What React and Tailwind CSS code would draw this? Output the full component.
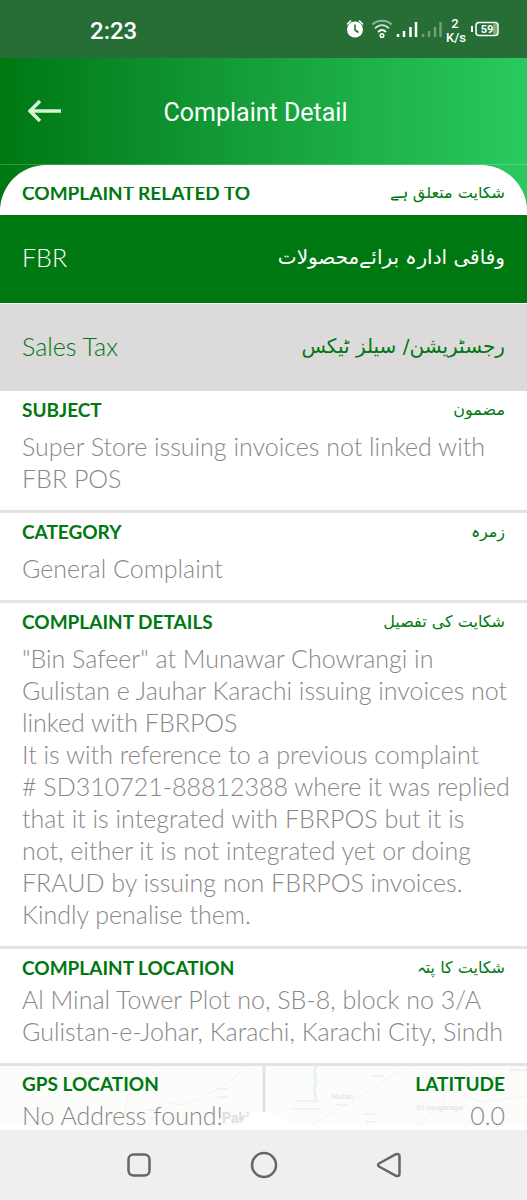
import clsx from 'clsx';

const sections = [
  {
    title: 'SUBJECT',
    urdu: 'مضمون',
    body: 'Super Store issuing invoices not linked with FBR POS',
  },
  { title: 'CATEGORY', urdu: 'زمرہ', body: 'General Complaint' },
  {
    title: 'COMPLAINT DETAILS',
    urdu: 'شکایت کی تفصیل',
    body: `"Bin Safeer" at Munawar Chowrangi in
Gulistan e Jauhar Karachi issuing invoices not
linked with FBRPOS
It is with reference to a previous complaint
# SD310721-88812388 where it was replied
that it is integrated with FBRPOS but it is
not, either it is not integrated yet or doing
FRAUD by issuing non FBRPOS invoices.
Kindly penalise them.`,
  },
  {
    title: 'COMPLAINT LOCATION',
    urdu: 'شکایت کا پتہ',
    body: 'Al Minal Tower Plot no, SB-8, block no 3/A Gulistan-e-Johar, Karachi, Karachi City, Sindh',
    tight: true,
  },
];

function StatusBar() {
  return (
    <div className="flex h-[58px] shrink-0 items-center justify-between bg-[#266e36] pl-[90px] pr-[26px] font-[Roboto,sans-serif] text-white">
      <span className="pt-1 text-2xl/8 font-medium">2:23</span>
      <svg width="156" height="32" viewBox="0 0 156 32" fill="none" stroke="#fff">
        <circle cx="10" cy="16.500" r="8" fill="#fff" stroke="none" />
        <path d="M2 11.500l4-4M18 11.500l-4-4" strokeWidth="1.600" />
        <path d="M10 11.500v5.500l3.500 2.500" stroke="#266e36" strokeWidth="1.600" />
        <g strokeWidth="1.800">
          <path d="M27.500 11.500c5-5 14-5 19 0" opacity=".5" />
          <path d="M30 15.500c4-4.500 10-4.500 14 0" opacity=".8" />
          <path d="M33 19c2.500-2.500 5.500-2.500 8 0" />
          <circle cx="37" cy="22.500" r="1.800" strokeWidth="1.500" />
        </g>
        <g strokeWidth="2.500">
          <path d="M53 24v-3M59 24v-6M65.500 24v-10M71 24v-15" />
          <path d="M78 24v-3M84 24v-6M90 24v-10M95.500 24v-15" opacity=".35" />
        </g>
        <rect x="148" y="10.500" width="4" height="11" fill="#fff" stroke="none" opacity=".4" />
        <g fill="#fff" stroke="none" fontFamily="Roboto, sans-serif" textAnchor="middle">
          <text x="110" y="15" fontSize="13" fontWeight="500">2</text>
          <text x="111" y="29" fontSize="13" fontWeight="500">K/s</text>
          <text x="142" y="20" fontSize="11" fontWeight="700">59</text>
        </g>
        <path d="M127 13v6" strokeWidth="2" />
        <rect x="131" y="9.500" width="22" height="13" rx="3" strokeWidth="1.500" />
      </svg>
    </div>
  );
}

function Heading({ title, urdu }) {
  return (
    <div className="flex items-center justify-between text-[#007811]">
      <h2 className="font-[Lato,sans-serif] text-[19px]/6 font-bold">{title}</h2>
      {urdu && (
        <span lang="ur" dir="rtl" className="font-['DejaVu_Sans',sans-serif] text-base/6">
          {urdu}
        </span>
      )}
    </div>
  );
}

function Row({ title, urdu, className }) {
  return (
    <div className={clsx('flex h-[88px] shrink-0 items-center justify-between px-[22px] pb-1', className)}>
      <span className="text-[25px]/8 font-light">{title}</span>
      <span lang="ur" dir="rtl" className="font-['DejaVu_Sans',sans-serif] text-xl/8">
        {urdu}
      </span>
    </div>
  );
}

function MapBackdrop() {
  return (
    <svg
      className="absolute inset-x-0 top-0 h-[60px] w-full"
      viewBox="0 0 527 60"
      preserveAspectRatio="xMidYMin slice"
      fill="none"
      aria-hidden="true"
    >
      <rect width="527" height="60" fill="#fcfcfb" />
      <path d="M36 0l4 8M128 64c-4-24-3-34 8-44l20-16M136 20c20 2 30 26 54 16s38-16 56-36" stroke="#f3f3f2" />
      <path d="M308 64c10-12 30-20 44-28s40-30 60-36M420 60c6-12 16-16 24-20v-20l28-14M444 20l36 16 47-6" stroke="#f5f3f0" />
      <path d="M316 0c-4 8 2 14-1 20s3 10 0 16" stroke="#e6f2fa" strokeWidth="3" />
      <path d="M216 23h12M218 31h10M148 44h12M150 52h8M296 35h24M292 43h28M336 39h10M364 48h12M366 56h10M372 10h12M510 4h17" stroke="#efefef" strokeWidth="2" strokeDasharray="3 1" />
      <g fill="#e2e2e2" fontFamily="Roboto, sans-serif" fontSize="7" textAnchor="middle">
        <text x="342" y="33">Multan</text>
        <text x="440" y="44">Sri Ganganagar</text>
      </g>
      <text x="222" y="57" fill="#dedede" fontFamily="Roboto, sans-serif" fontSize="14" fontWeight="700">
        Pakistan
      </text>
    </svg>
  );
}

export default function App() {
  return (
    <div className="flex h-screen flex-col overflow-hidden bg-white font-[Lato,sans-serif]">
      <StatusBar />

      <div className="shrink-0 bg-linear-to-r from-[#007811] to-[#2aca60]">
        <header className="grid h-[107px] grid-cols-[88px_1fr_104px] items-center border-b border-white/20">
          <button type="button" aria-label="Back" className="flex h-full items-center pl-7 text-[#d5f5d8]">
            <svg width="34" height="24" viewBox="0 0 34 24" fill="none" stroke="currentColor" strokeWidth="3.500">
              <path d="M12 2L2 12l10 10M2 12h31" />
            </svg>
          </button>
          <h1 className="pt-1 text-center font-[Roboto,sans-serif] text-[25px]/8 text-white">Complaint Detail</h1>
        </header>
        <div className="h-[50px] rounded-t-[46px] bg-white px-[22px] pt-[22px]">
          <div className="flex h-7 flex-col justify-end overflow-hidden pb-2.5">
            <Heading title="COMPLAINT RELATED TO" urdu="شکایت متعلق ہے" />
          </div>
        </div>
      </div>

      <main className="flex min-h-0 flex-1 flex-col overflow-hidden">
        <Row title="FBR" urdu="وفاقی ادارہ برائےمحصولات" className="bg-[#007811] text-white" />
        <Row title="Sales Tax" urdu="رجسٹریشن/ سیلز ٹیکس" className="border-t border-white bg-[#dcdadb] text-[#007811]" />

        {sections.map((s) => (
          <section key={s.title} className="shrink-0 border-b-[3px] border-[#e3e3e3] pb-4 pl-[22px] pr-3 pt-[7px]">
            <div className="pr-2.5">
              <Heading title={s.title} urdu={s.urdu} />
            </div>
            <p
              className={clsx(
                'whitespace-pre-line text-[25px]/8 font-light text-[#8a8788]',
                s.tight ? 'mt-[3px]' : 'mt-2'
              )}
            >
              {s.body}
            </p>
          </section>
        ))}

        <section className="relative grid shrink-0 grid-cols-2">
          <MapBackdrop />
          <div className="absolute left-1/2 top-0 h-[60px] w-[3px] -translate-x-1/2 bg-[#e3e3e3]" />
          <div className="absolute left-1/2 top-[46px] size-[58px] -translate-x-1/2 rounded-full bg-white" />
          <div className="relative pl-[22px] pt-1.5">
            <Heading title="GPS LOCATION" />
            <p className="mt-[3px] text-[25px]/8 font-light text-[#8a8788]">No Address found!</p>
          </div>
          <div className="relative pr-[22px] pt-1.5 text-right">
            <div className="flex justify-end">
              <Heading title="LATITUDE" />
            </div>
            <p className="mt-[3px] text-[25px]/8 font-light text-[#8a8788]">0.0</p>
          </div>
        </section>
      </main>

      <nav className="flex h-[70px] shrink-0 items-center justify-center gap-[98px] bg-[#efefef] text-[#666]">
        <button type="button" aria-label="Recent apps">
          <svg width="26" height="26" viewBox="0 0 26 26" fill="none" stroke="currentColor" strokeWidth="2.500">
            <rect x="2.500" y="2.500" width="21" height="21" rx="5" />
          </svg>
        </button>
        <button type="button" aria-label="Home">
          <svg width="28" height="28" viewBox="0 0 28 28" fill="none" stroke="currentColor" strokeWidth="2.500">
            <circle cx="14" cy="14" r="12" />
          </svg>
        </button>
        <button type="button" aria-label="Back">
          <svg width="26" height="26" viewBox="0 0 26 26" fill="none" stroke="currentColor" strokeWidth="2.500" strokeLinejoin="round">
            <path d="M3 11.500L20 2.200Q23.500 1 23.500 4.500v17Q23.500 25 20 23.800L3 14.500Q1 13 3 11.500z" />
          </svg>
        </button>
      </nav>
    </div>
  );
}
